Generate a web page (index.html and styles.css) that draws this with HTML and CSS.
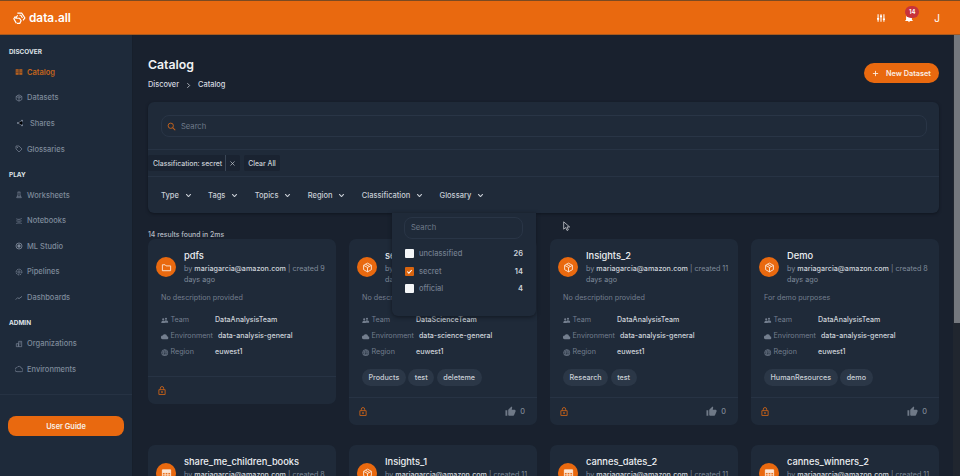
FILE: index.html
```html
<!DOCTYPE html>
<html lang="en">
<head>
<meta charset="utf-8">
<title>Catalog | data.all</title>
<link rel="stylesheet" href="styles.css">
</head>
<body>
<svg class="defs" width="0" height="0" aria-hidden="true">
  <symbol id="cube" viewBox="0 0 24 24"><path fill="none" stroke="currentColor" stroke-width="2" stroke-linejoin="round" d="M12 2.5l8.500 4.800v9.400L12 21.500l-8.500-4.800V7.300zM3.500 7.300L12 12l8.500-4.700M12 12v9.500M7.700 4.900l8.500 4.800"/></symbol>
  <symbol id="lock" viewBox="0 0 24 24"><path fill="none" stroke="currentColor" stroke-width="2.400" d="M4.500 10h15v11.500h-15zM8 10V6.500a4 4 0 0 1 8 0V10"/><circle cx="12" cy="15.500" r="2.200" fill="currentColor"/></symbol>
  <symbol id="thumb" viewBox="0 0 24 24"><path fill="currentColor" d="M1 21h4V9H1zm22-11a2 2 0 0 0-2-2h-6.300l1-4.600v-.3c0-.4-.2-.8-.4-1.100L14.200 1 7.600 7.600C7.200 8 7 8.500 7 9v10a2 2 0 0 0 2 2h9c.8 0 1.500-.5 1.800-1.200l3-7c.1-.3.200-.5.200-.8z"/></symbol>
  <symbol id="team" viewBox="0 0 24 24"><path fill="currentColor" d="M7 4a3.500 3.500 0 1 1 0 7 3.500 3.500 0 0 1 0-7zm9-2a3.500 3.500 0 1 1 0 7 3.500 3.500 0 0 1 0-7zM1 17c0-3 3-5 6-5 1.500 0 2.800.4 3.800 1.200 1-1 3-2.700 5.200-2.700 3.500 0 7 2.500 7 5V18H12v1H1z"/></symbol>
  <symbol id="cloud" viewBox="0 0 24 24"><path fill="currentColor" d="M19.400 10A7.500 7.500 0 0 0 5.400 8 6 6 0 0 0 6 20h13a5 5 0 0 0 .4-10z"/></symbol>
  <symbol id="globe" viewBox="0 0 24 24"><circle cx="12" cy="12" r="10" fill="none" stroke="currentColor" stroke-width="2"/><path fill="none" stroke="currentColor" stroke-width="1.800" d="M2 12h20M3.500 7h17M3.500 17h17M12 2c-6 6-6 14 0 20M12 2c6 6 6 14 0 20"/></symbol>
  <symbol id="table" viewBox="0 0 24 24"><path fill="none" stroke="currentColor" stroke-width="2" d="M3 4h18v16H3zM3 10h18M3 15h18M9 10v10M15 10v10"/><path fill="currentColor" d="M3 4h18v6H3z"/></symbol>
  <symbol id="folder" viewBox="0 0 24 24"><path fill="none" stroke="currentColor" stroke-width="2" stroke-linejoin="round" d="M3 6h6l2 2.500h10V19H3z"/></symbol>
  <symbol id="chev" viewBox="0 0 12 12"><path fill="none" stroke="currentColor" stroke-width="1.800" stroke-linecap="round" stroke-linejoin="round" d="M2.500 4.200L6 7.800l3.500-3.600"/></symbol>
</svg>

<header class="topbar">
  <div class="brand">
    <svg class="brand-mark" viewBox="0 0 24 24"><path fill="none" stroke="currentColor" stroke-width="2.200" stroke-linejoin="round" d="M8 2h8l6 9-3.500 4.500M4.500 8L1.500 12.500 6 20.500M8.500 6l-3.500 5.500h7l3 4.500-2.500 5H7M12 6h2.500l3 5"/></svg>
    <span>data.all</span>
  </div>
  <div class="top-actions">
    <svg class="top-icon" viewBox="0 0 24 24"><path fill="none" stroke="currentColor" stroke-width="2.600" d="M5 3v18M12 3v18M19 3v18"/><path fill="currentColor" d="M2.500 12h5v4h-5zM9.500 6h5v4h-5zM16.500 13h5v4h-5z"/></svg>
    <div class="bell">
      <svg class="top-icon" viewBox="0 0 24 24"><path fill="currentColor" d="M12 22a2.500 2.500 0 0 0 2.500-2h-5A2.500 2.500 0 0 0 12 22zm7-6v-5c0-3.300-1.800-6-5-6.800V3a2 2 0 0 0-4 0v1.200C6.800 5 5 7.700 5 11v5l-2 2v1h18v-1z"/></svg>
      <span class="badge">14</span>
    </div>
    <span class="user">J</span>
  </div>
</header>

<div class="shell">
  <nav class="sidebar">
    <div class="nav-groups">
      <section class="nav-group">
        <h2 class="nav-title">DISCOVER</h2>
        <a class="nav-item active"><svg viewBox="0 0 24 24"><path fill="currentColor" d="M2 4h9v16H2zM13 4h9v16h-9z"/><path stroke="#1e2a3a" stroke-width="1.500" d="M2 9h9M2 14h9M13 9h9M13 14h9"/></svg>Catalog</a>
        <a class="nav-item"><svg viewBox="0 0 24 24"><use href="#cube"/></svg>Datasets</a>
        <a class="nav-item shifted"><svg viewBox="0 0 24 24"><circle cx="18" cy="5" r="3" fill="currentColor"/><circle cx="6" cy="12" r="3" fill="currentColor"/><circle cx="18" cy="19" r="3" fill="currentColor"/><path stroke="currentColor" stroke-width="1.800" d="M18 5L6 12l12 7"/></svg>Shares</a>
        <a class="nav-item"><svg viewBox="0 0 24 24"><path fill="none" stroke="currentColor" stroke-width="2" stroke-linejoin="round" d="M3 3h9l9 9-9 9-9-9z"/><circle cx="7.500" cy="7.500" r="1.500" fill="currentColor"/></svg>Glossaries</a>
      </section>
      <section class="nav-group">
        <h2 class="nav-title">PLAY</h2>
        <a class="nav-item"><svg viewBox="0 0 24 24"><path fill="none" stroke="currentColor" stroke-width="2" d="M8 3h8M9 3v9l-4 8h14l-4-8V3M7 16h10"/></svg>Worksheets</a>
        <a class="nav-item"><svg viewBox="0 0 24 24"><path fill="none" stroke="currentColor" stroke-width="2" stroke-linecap="round" d="M5 6c4 2 10 2 14-1M5 12c4 1 10 1 14 0M5 19c4-2 10-2 14 0"/></svg>Notebooks</a>
        <a class="nav-item"><svg viewBox="0 0 24 24"><circle cx="12" cy="12" r="9" fill="none" stroke="currentColor" stroke-width="2.500"/><circle cx="12" cy="12" r="5" fill="currentColor"/></svg>ML Studio</a>
        <a class="nav-item"><svg viewBox="0 0 24 24"><circle cx="12" cy="12" r="3.500" fill="none" stroke="currentColor" stroke-width="2"/><circle cx="12" cy="12" r="8.500" fill="none" stroke="currentColor" stroke-width="3" stroke-dasharray="4 2.700"/></svg>Pipelines</a>
        <a class="nav-item"><svg viewBox="0 0 24 24"><path fill="none" stroke="currentColor" stroke-width="2.200" d="M2 17l6-6 4 3 9-7"/></svg>Dashboards</a>
      </section>
      <section class="nav-group">
        <h2 class="nav-title">ADMIN</h2>
        <a class="nav-item"><svg viewBox="0 0 24 24"><path fill="none" stroke="currentColor" stroke-width="2" d="M11 20V4h9v16zM4 20v-9h7v9zM14 8h3M14 12h3M7 15h1"/></svg>Organizations</a>
        <a class="nav-item"><svg viewBox="0 0 24 24"><path fill="none" stroke="currentColor" stroke-width="2" d="M19.400 10A7.500 7.500 0 0 0 5.400 8 6 6 0 0 0 6 20h13a5 5 0 0 0 .4-10z"/></svg>Environments</a>
      </section>
    </div>
    <div class="guide-wrap"><button class="guide">User Guide</button></div>
  </nav>

  <main class="content">
    <div class="page-head">
      <div>
        <h1 class="page-title">Catalog</h1>
        <div class="crumbs"><span>Discover</span><svg viewBox="0 0 12 12"><path fill="none" stroke="currentColor" stroke-width="1.300" d="M4 2l4 4-4 4"/></svg><span>Catalog</span></div>
      </div>
      <button class="new-btn"><svg viewBox="0 0 12 12"><path stroke="currentColor" stroke-width="1.500" d="M6 1.500v9M1.500 6h9"/></svg>New Dataset</button>
    </div>

    <section class="filters">
      <div class="search-row">
        <div class="search-box">
          <svg viewBox="0 0 24 24"><circle cx="10" cy="10" r="7" fill="none" stroke="currentColor" stroke-width="2.500"/><path stroke="currentColor" stroke-width="2.800" d="M15 15l7 7"/></svg>
          <span>Search</span>
        </div>
      </div>
      <div class="chips-row">
        <div class="sel-chip"><span>Classification: secret</span><i class="sel-sep"></i><svg viewBox="0 0 12 12"><path stroke="currentColor" stroke-width="1.100" d="M2.500 2.500l7 7M9.500 2.500l-7 7"/></svg></div>
        <div class="clear-chip">Clear All</div>
      </div>
      <div class="menu-row">
        <span class="menu">Type<svg><use href="#chev"/></svg></span>
        <span class="menu">Tags<svg><use href="#chev"/></svg></span>
        <span class="menu">Topics<svg><use href="#chev"/></svg></span>
        <span class="menu">Region<svg><use href="#chev"/></svg></span>
        <span class="menu">Classification<svg><use href="#chev"/></svg></span>
        <span class="menu">Glossary<svg><use href="#chev"/></svg></span>
      </div>
    </section>

    <p class="results">14 results found in 2ms</p>

    <div class="cards">
      <article class="card">
        <div class="card-head">
          <span class="avatar"><svg><use href="#folder"/></svg></span>
          <div><h3>pdfs</h3><p class="by">by <b>mariagarcia@amazon.com</b> | created 9 days ago</p></div>
        </div>
        <p class="desc">No description provided</p>
        <dl class="meta">
          <div><dt><svg><use href="#team"/></svg>Team</dt><dd>DataAnalysisTeam</dd></div>
          <div><dt><svg><use href="#cloud"/></svg>Environment</dt><dd>data-analysis-general</dd></div>
          <div><dt><svg><use href="#globe"/></svg>Region</dt><dd>euwest1</dd></div>
        </dl>
        <div class="card-foot"><svg class="lock"><use href="#lock"/></svg></div>
      </article>

      <article class="card">
        <div class="card-head">
          <span class="avatar"><svg><use href="#cube"/></svg></span>
          <div><h3>secretdata</h3><p class="by">by <b>mariagarcia@amazon.com</b> | created 11 days ago</p></div>
        </div>
        <p class="desc">No description provided</p>
        <dl class="meta">
          <div><dt><svg><use href="#team"/></svg>Team</dt><dd>DataScienceTeam</dd></div>
          <div><dt><svg><use href="#cloud"/></svg>Environment</dt><dd>data-science-general</dd></div>
          <div><dt><svg><use href="#globe"/></svg>Region</dt><dd>euwest1</dd></div>
        </dl>
        <div class="tags"><span>Products</span><span>test</span><span>deleteme</span></div>
        <div class="card-foot"><svg class="lock"><use href="#lock"/></svg><span class="likes"><svg><use href="#thumb"/></svg>0</span></div>
      </article>

      <article class="card">
        <div class="card-head">
          <span class="avatar"><svg><use href="#cube"/></svg></span>
          <div><h3>Insights_2</h3><p class="by">by <b>mariagarcia@amazon.com</b> | created 11 days ago</p></div>
        </div>
        <p class="desc">No description provided</p>
        <dl class="meta">
          <div><dt><svg><use href="#team"/></svg>Team</dt><dd>DataAnalysisTeam</dd></div>
          <div><dt><svg><use href="#cloud"/></svg>Environment</dt><dd>data-analysis-general</dd></div>
          <div><dt><svg><use href="#globe"/></svg>Region</dt><dd>euwest1</dd></div>
        </dl>
        <div class="tags"><span>Research</span><span>test</span></div>
        <div class="card-foot"><svg class="lock"><use href="#lock"/></svg><span class="likes"><svg><use href="#thumb"/></svg>0</span></div>
      </article>

      <article class="card">
        <div class="card-head">
          <span class="avatar"><svg><use href="#cube"/></svg></span>
          <div><h3>Demo</h3><p class="by">by <b>mariagarcia@amazon.com</b> | created 8 days ago</p></div>
        </div>
        <p class="desc">For demo purposes</p>
        <dl class="meta">
          <div><dt><svg><use href="#team"/></svg>Team</dt><dd>DataAnalysisTeam</dd></div>
          <div><dt><svg><use href="#cloud"/></svg>Environment</dt><dd>data-analysis-general</dd></div>
          <div><dt><svg><use href="#globe"/></svg>Region</dt><dd>euwest1</dd></div>
        </dl>
        <div class="tags"><span>HumanResources</span><span>demo</span></div>
        <div class="card-foot"><svg class="lock"><use href="#lock"/></svg><span class="likes"><svg><use href="#thumb"/></svg>0</span></div>
      </article>

      <article class="card">
        <div class="card-head">
          <span class="avatar"><svg><use href="#table"/></svg></span>
          <div><h3>share_me_children_books</h3><p class="by">by <b>mariagarcia@amazon.com</b> | created 8 days ago</p></div>
        </div>
      </article>
      <article class="card">
        <div class="card-head">
          <span class="avatar"><svg><use href="#cube"/></svg></span>
          <div><h3>Insights_1</h3><p class="by">by <b>mariagarcia@amazon.com</b> | created 11 days ago</p></div>
        </div>
      </article>
      <article class="card">
        <div class="card-head">
          <span class="avatar"><svg><use href="#table"/></svg></span>
          <div><h3>cannes_dates_2</h3><p class="by">by <b>mariagarcia@amazon.com</b> | created 11 days ago</p></div>
        </div>
      </article>
      <article class="card">
        <div class="card-head">
          <span class="avatar"><svg><use href="#table"/></svg></span>
          <div><h3>cannes_winners_2</h3><p class="by">by <b>mariagarcia@amazon.com</b> | created 11 days ago</p></div>
        </div>
      </article>
    </div>

    <div class="popover">
      <div class="pop-search">Search</div>
      <label class="opt"><i class="box"></i><span>unclassified</span><b>26</b></label>
      <label class="opt"><i class="box on"><svg viewBox="0 0 12 12"><path fill="none" stroke="#fff" stroke-width="1.400" d="M3 6l2.200 2.200L9 4"/></svg></i><span>secret</span><b>14</b></label>
      <label class="opt"><i class="box"></i><span>official</span><b>4</b></label>
    </div>

    <svg class="cursor" viewBox="0 0 12 16"><path fill="#1a2230" stroke="#e8eaed" stroke-width="1" d="M1 1v11l3-2.500 2 4.500 2-1-2-4.300h4z"/></svg>
  </main>

  <div class="rail"><div class="thumb"></div></div>
</div>
</body>
</html>
```

FILE: styles.css
```css
* { box-sizing: border-box; }
html, body { margin: 0; height: 100%; }
body {
  width: 960px; height: 476px; overflow: hidden;
  background: #19212e; color: #e3e7ec;
  font-family: Inter, "Liberation Sans", sans-serif;
  font-size: 8px;
}
.defs { position: absolute; }
svg { display: block; flex: none; }
p, h1, h2, h3, dl, dd { margin: 0; }

.topbar {
  height: 35px; padding: 1px 20px 0 13px;
  display: flex; align-items: center; justify-content: space-between;
  background: #e9690f; color: #fff;
  border-top: 1px solid #7a4a22; border-bottom: 1px solid #a75a1f;
}
.brand { display: flex; align-items: center; gap: 3px; font-size: 11.800px; font-weight: 600; }
.brand-mark { width: 13px; height: 13px; }
.top-actions { display: flex; align-items: center; }
.top-icon { width: 10px; height: 10px; }
.bell { position: relative; margin-left: 18px; }
.badge {
  position: absolute; left: 1px; top: -7px;
  height: 12px; min-width: 14px; padding: 0 2px; border-radius: 6px;
  background: #c7333a; color: #fff;
  font-size: 6px; font-weight: 600; line-height: 12px; text-align: center;
}
.user { margin-left: 20px; font-size: 10px; }

.shell { height: 441px; display: flex; }

.sidebar {
  width: 133px; flex: none; display: flex; flex-direction: column;
  background: #1e2a3a; border-right: 1px solid #171f2b;
}
.nav-groups { height: 359px; padding-top: 12px; }
.nav-group { margin-bottom: 8px; }
.nav-title { padding: 0 9px; font-size: 6.400px; line-height: 10px; font-weight: 700; color: #dfe3e8; }
.nav-item {
  height: 25.600px; padding-left: 15px;
  display: flex; align-items: center; gap: 4px;
  color: #7f8a9b; font-size: 7.500px; font-weight: 500;
}
.nav-title + .nav-item { margin-top: 2.500px; }
.nav-item svg { width: 8px; height: 8px; }
.nav-item.shifted { gap: 6px; padding-left: 16px; }
.nav-item.active { color: #c5651c; font-weight: 600; }
.guide-wrap { padding: 21px 9px 0 8px; border-top: 1px solid #263243; }
.guide {
  width: 116px; height: 20px; display: block; border: 0; border-radius: 8px;
  background: #e9690f; color: #f7efe8;
  font: 600 7.400px Inter, sans-serif;
}

.content { position: relative; flex: 1; min-width: 0; padding: 21px 14px 0 15px; overflow: hidden; }
.page-head { display: flex; justify-content: space-between; align-items: flex-start; height: 46px; }
.page-title { font-size: 12.300px; line-height: 18px; font-weight: 600; color: #f0f2f4; }
.crumbs { margin-top: 6px; display: flex; align-items: center; gap: 6px; font-size: 7.400px; line-height: 10px; font-weight: 500; color: #d6dae0; }
.crumbs svg { width: 7px; height: 7px; }
.new-btn {
  margin-top: 7px; width: 75px; height: 20px; padding: 0 0 0 8px;
  display: flex; align-items: center; gap: 7px;
  border: 0; border-radius: 10px; background: #e9690f; color: #fbeee4;
  font: 600 7.300px Inter, sans-serif;
}
.new-btn svg { width: 7px; height: 7px; }

.filters { height: 111px; background: #1f2a39; border-radius: 6px; box-shadow: 0 1px 3px #10161f; }
.search-row { height: 48px; padding: 13px 12px 0 13px; border-bottom: 1px solid #273344; }
.search-box {
  height: 22px; padding-left: 5px;
  display: flex; align-items: center; gap: 5px;
  border: 1px solid #293546; border-radius: 8px;
  color: #6f7a8a; font-size: 7.600px;
}
.search-box svg { width: 9px; height: 9px; color: #c9641c; }
.chips-row { height: 27px; padding-top: 5px; display: flex; gap: 4px; border-bottom: 1px solid #273344; }
.sel-chip, .clear-chip {
  height: 16px; display: flex; align-items: center;
  background: #1a2331; color: #ccd1d8; font-size: 6.900px; font-weight: 500;
}
.sel-chip { padding-left: 5px; border-radius: 2px; }
.sel-sep { width: 1px; height: 16px; margin: 0 3px 0 3px; background: #3a4656; }
.sel-chip svg { width: 7px; height: 7px; margin-right: 4px; }
.clear-chip { padding: 0 4px; border-radius: 2px; }
.menu-row { height: 36px; padding-left: 13px; display: flex; align-items: center; gap: 16.300px; }
.menu { display: flex; align-items: center; gap: 6px; font-size: 7.500px; font-weight: 500; color: #c9ced6; }
.menu svg { width: 7px; height: 7px; }

.results { margin-top: 17px; height: 9px; line-height: 9px; font-size: 6.900px; font-weight: 500; color: #b4bac3; }

.cards { margin-top: 0; display: grid; grid-template-columns: repeat(4, 188px); grid-auto-rows: 184px; column-gap: 13px; row-gap: 22px; align-items: start; }
.card { background: #1f2a39; border-radius: 7px; }
.card-head { height: 48px; padding: 9px 8px 0 8px; display: flex; gap: 8px; align-items: center; }
.card-head h3 { font-size: 9.300px; line-height: 11px; font-weight: 500; color: #eceef1; }
.avatar { width: 20px; height: 20px; margin-top: -1px; flex: none; display: flex; align-items: center; justify-content: center; border-radius: 50%; background: #e9690f; color: #fbe6d6; }
.avatar svg { width: 11px; height: 11px; }
.by { margin-top: 2px; font-size: 7.200px; line-height: 11.500px; color: #7f8a9b; }
.by b { font-weight: 500; color: #ced3da; }
.desc { padding: 5px 13px 0; height: 22px; font-size: 7.200px; line-height: 11px; color: #737e8e; }
.meta { padding: 6px 13px 0; display: flex; flex-direction: column; gap: 5.500px; }
.meta div { display: flex; }
.meta dt { min-width: 54px; padding-right: 5px; display: flex; align-items: center; gap: 2px; color: #737e8e; font-size: 7.200px; line-height: 10.500px; white-space: nowrap; }
.meta dt svg { width: 7.500px; height: 7.500px; }
.meta dd { color: #ced3da; font-size: 7.100px; line-height: 10.500px; font-weight: 500; white-space: nowrap; }
.tags { margin-top: 11px; height: 18px; padding: 0 13px; display: flex; gap: 2.500px; }
.tags span { height: 17px; padding: 0 6.500px; border-radius: 9px; background: #2b3747; color: #c9ced5; font-size: 7.200px; font-weight: 500; line-height: 17px; }
.card-foot { margin-top: 10px; height: 28px; padding: 0 12px 0 13px; display: flex; align-items: center; justify-content: space-between; border-top: 1px solid #273344; }
.meta + .card-foot { margin-top: 18px; }
.lock { width: 10px; height: 11px; color: #b85d1c; margin-left: -4px; }
.likes { display: flex; align-items: center; gap: 4px; color: #8f98a5; font-size: 7.500px; }
.likes svg { width: 11px; height: 11px; color: #6f7987; }

.popover {
  position: absolute; left: 259px; top: 178px; width: 144px; height: 103px;
  padding: 4px 13px 0 12px;
  background: #1f2a39; border-radius: 0 0 6px 6px; box-shadow: 0 1px 4px #121821;
}
.pop-search { height: 22px; padding-left: 6px; border: 1px solid #293546; border-radius: 8px; color: #6f7a8a; font-size: 7.600px; line-height: 20px; }
.opt { height: 17.500px; display: flex; align-items: center; font-size: 7.500px; }
.pop-search + .opt { margin-top: 6px; }
.box { width: 9px; height: 9px; margin-left: 1px; margin-right: 5px; background: #f4f6f8; border-radius: 1px; }
.box.on { background: #d9640f; }
.box svg { width: 9px; height: 9px; }
.opt span { flex: 1; color: #737e8e; font-weight: 500; }
.opt b { color: #ced3da; font-weight: 600; }

.cursor { position: absolute; left: 430px; top: 186px; width: 8px; height: 11px; }

.rail { width: 7px; flex: none; background: #20262f; }
.thumb { height: 288px; margin-left: 1px; background: #74787e; }
```
